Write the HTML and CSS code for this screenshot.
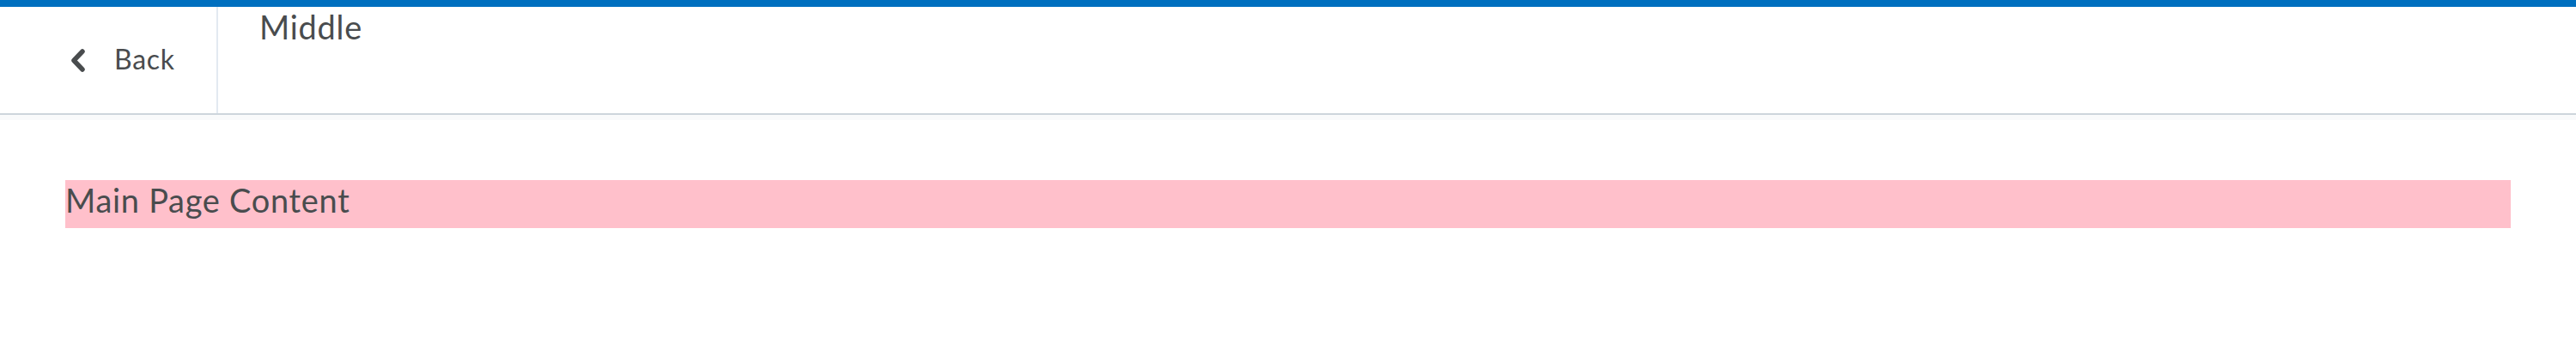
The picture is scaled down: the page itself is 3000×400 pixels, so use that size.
FILE: index.html
```html
<!DOCTYPE html>
<html lang="en">
<head>
<meta charset="utf-8">
<title>Navigation</title>
<link rel="stylesheet" href="styles.css">
</head>
<body>
<div class="topbar"></div>
<header class="nav">
  <a class="back" href="#">
    <svg class="chevron" width="17" height="27" viewBox="0 0 17 27" aria-hidden="true">
      <polyline points="14,3 4,13.5 14,24" fill="none" stroke="#494c4e" stroke-width="5.5" stroke-linecap="round" stroke-linejoin="round"/>
    </svg>
    <span class="back-label">Back</span>
  </a>
  <div class="middle">Middle</div>
</header>
<main class="content">
  <div class="box">Main Page Content</div>
</main>
</body>
</html>
```
FILE: styles.css
```css
html, body {
  margin: 0;
  padding: 0;
  background: #ffffff;
}
body {
  font-family: Lato, "Open Sans", sans-serif;
  color: #494c4e;
}
.topbar {
  height: 8px;
  background: #006fbf;
}
.nav {
  display: flex;
  align-items: stretch;
  height: 124px;
  border-bottom: 2px solid #cdd5dc;
  box-shadow: 0 6px 0 0 #f9fafb;
}
.back {
  display: flex;
  align-items: center;
  gap: 34px;
  width: 170px;
  padding-left: 82px;
  border-right: 2px solid #e3e9f1;
  color: #494c4e;
  text-decoration: none;
}
.chevron {
  display: block;
  flex: none;
}
.back-label {
  font-size: 32px;
  line-height: 40px;
  letter-spacing: 0.7px;
  padding-bottom: 3px;
}
.middle {
  align-self: flex-start;
  padding-left: 48px;
  font-size: 38px;
  line-height: normal;
  letter-spacing: 0.7px;
}
.content {
  padding: 76px 76px 0;
}
.box {
  background: #ffc0cb;
  font-size: 38px;
  line-height: 46px;
  height: 56px;
  letter-spacing: 0.7px;
}
```
